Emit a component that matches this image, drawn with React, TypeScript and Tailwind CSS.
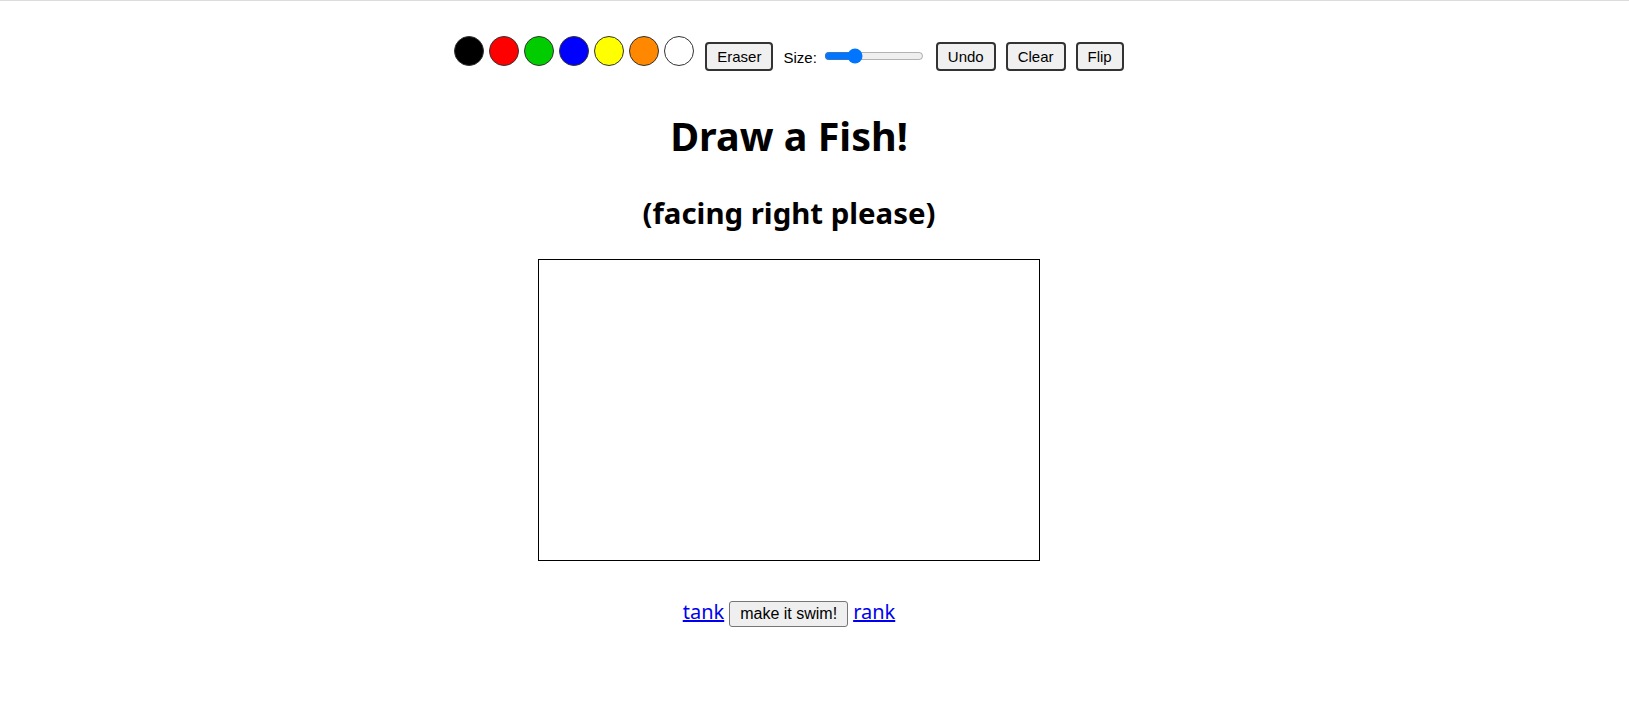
import React from "react";

const colors = ["#000000", "#ff0000", "#00cc00", "#0000ff", "#ffff00", "#ff8800", "#ffffff"];

function ToolButton({ label, className = "" }: { label: string; className?: string }) {
  return (
    <button
      className={`mt-[5.5px] border-2 border-[#333333] rounded-[4px] bg-[#f0f0f0] px-[10px] py-[4px] text-[15px] leading-[17px] text-black ${className}`}
      style={{ fontFamily: '"Liberation Sans", Arial, sans-serif' }}
    >
      {label}
    </button>
  );
}

export default function App() {
  return (
    <div className="min-h-[713px] w-[1629px] border-t border-[#dcdcdc] bg-white">
      <div className="flex w-[1578px] flex-col items-center pt-[35px]">
        <div className="flex items-start" style={{ fontFamily: '"Liberation Sans", Arial, sans-serif' }}>
          <div className="flex gap-[5px]">
            {colors.map((c) => (
              <div
                key={c}
                className="h-[30px] w-[30px] rounded-full border border-[#333333]"
                style={{ backgroundColor: c }}
              />
            ))}
          </div>
          <ToolButton label="Eraser" className="ml-[11px]" />
          <span className="ml-[10px] mt-[13px] text-[15px] leading-[17px] text-black">Size:</span>
          <input
            type="range"
            min={1}
            max={30}
            defaultValue={9}
            className="ml-[7px] mt-[12px] w-[100px] accent-[#0075ff]"
          />
          <ToolButton label="Undo" className="ml-[12px]" />
          <ToolButton label="Clear" className="ml-[10px]" />
          <ToolButton label="Flip" className="ml-[10px]" />
        </div>

        <h1
          className="mt-[39px] text-[39.5px] font-bold leading-[53px] text-black"
          style={{ fontFamily: '"Noto Sans", sans-serif' }}
        >
          Draw a Fish!
        </h1>
        <h2
          className="mt-[31px] text-[29.4px] font-bold leading-[39.5px] text-black"
          style={{ fontFamily: '"Noto Sans", sans-serif' }}
        >
          (facing right please)
        </h2>

        <div className="mt-[26px] h-[302px] w-[502px] border border-black bg-white" />

        <div className="mt-[36px] flex items-baseline gap-[5px]">
          <a
            href="#"
            className="text-[20px] text-[#0000ee] underline"
            style={{ fontFamily: '"Noto Sans", sans-serif' }}
          >
            tank
          </a>
          <button
            className="rounded-[3px] border border-[#767676] bg-[#efefef] px-[10px] py-[3px] text-[16px] leading-[18px] text-black"
            style={{ fontFamily: '"Liberation Sans", Arial, sans-serif' }}
          >
            make it swim!
          </button>
          <a
            href="#"
            className="text-[20px] text-[#0000ee] underline"
            style={{ fontFamily: '"Noto Sans", sans-serif' }}
          >
            rank
          </a>
        </div>
      </div>
    </div>
  );
}
